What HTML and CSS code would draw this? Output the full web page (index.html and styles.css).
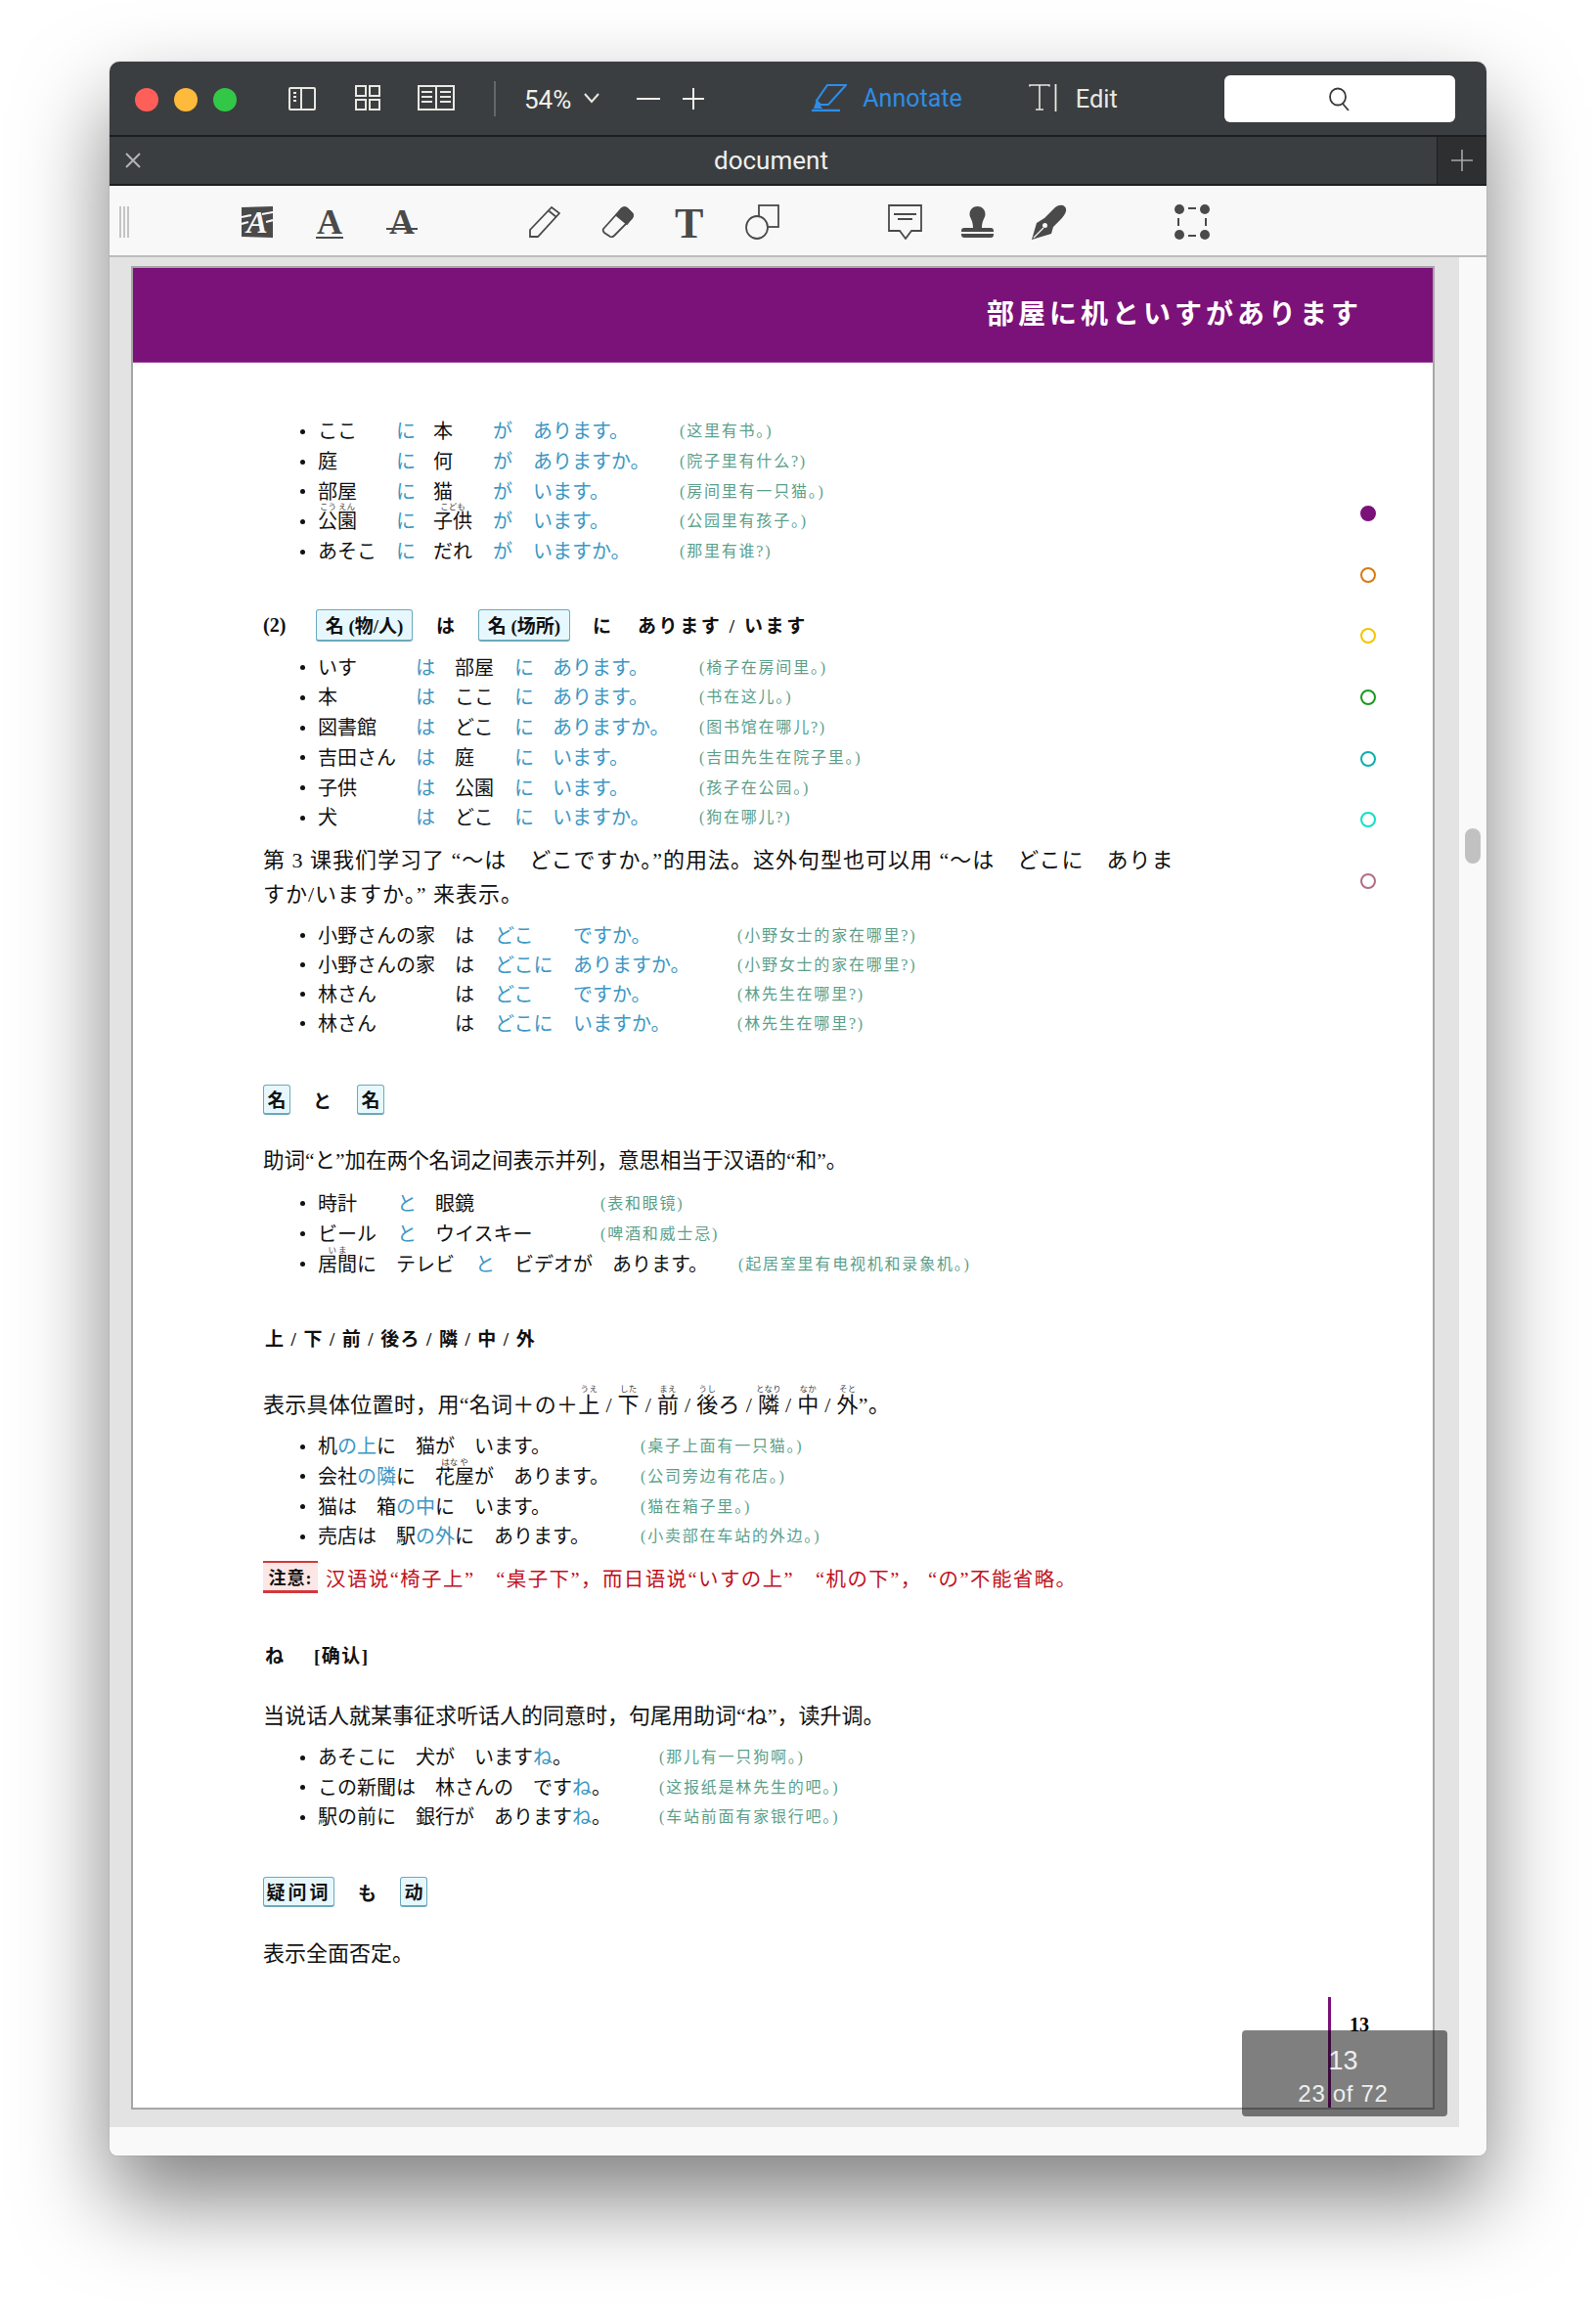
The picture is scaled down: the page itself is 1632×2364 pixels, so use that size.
FILE: index.html
```html
<!DOCTYPE html>
<html lang="ja">
<head>
  <meta charset="utf-8">
  <title>document</title>
  <link rel="stylesheet" href="styles.css">
</head>
<body>
<div class="window">

  <div class="titlebar">
    <div class="lights">
      <span class="light red"></span>
      <span class="light yellow"></span>
      <span class="light green"></span>
    </div>
    <svg class="tb-sidebar" width="28" height="24" viewBox="0 0 28 24" fill="none" stroke="#e8e8e0" stroke-width="2">
      <rect x="1" y="1" width="26" height="22" rx="1"/><path d="M13 1v22M5 6h3M5 10h3M5 14h3"/>
    </svg>
    <svg class="tb-grid" width="26" height="26" viewBox="0 0 26 26" fill="none" stroke="#e8e8e0" stroke-width="2">
      <rect x="1" y="1" width="10" height="10"/><rect x="15" y="1" width="10" height="10"/>
      <rect x="1" y="15" width="10" height="10"/><rect x="15" y="15" width="10" height="10"/>
    </svg>
    <svg class="tb-book" width="38" height="26" viewBox="0 0 38 26" fill="none" stroke="#e8e8e0" stroke-width="2">
      <rect x="1" y="1" width="36" height="24"/><path d="M19 1v24M4 7h11M4 12h11M4 17h11M23 7h11M23 12h11M23 17h11"/>
    </svg>
    <span class="tb-divider"></span>
    <span class="zoom-value">54%</span>
    <svg class="tb-chevron" width="16" height="11" viewBox="0 0 16 11" fill="none" stroke="#e8e8e0" stroke-width="2"><path d="M1 1l7 8 7-8"/></svg>
    <span class="zoom-minus"></span>
    <svg class="tb-plus" width="22" height="22" viewBox="0 0 22 22" stroke="#f0f0e8" stroke-width="2"><path d="M0 11h22M11 0v22"/></svg>
    <svg class="tb-annotate" width="36" height="28" viewBox="0 0 36 28" fill="none" stroke="#2e8de6" stroke-width="2">
      <path d="M16 1h19L17 21H9L5 17z"/><path d="M0 27h29" stroke-width="2.400"/><path d="M5 16l-3 9h9z" fill="#2e8de6" stroke="none"/>
    </svg>
    <span class="annotate-label">Annotate</span>
    <svg class="tb-edit" width="29" height="28" viewBox="0 0 29 28" fill="none" stroke="#e8e8e0" stroke-width="1.600">
      <path d="M1 2.500V1h20v1.500M11 1v25M7 26h8"/><path d="M27.500 0v28" stroke-width="1.800"/>
    </svg>
    <span class="edit-label">Edit</span>
    <div class="search">
      <svg width="22" height="24" viewBox="0 0 22 24" fill="none" stroke="#3a3a3a" stroke-width="1.800"><ellipse cx="9" cy="10" rx="8" ry="8.500"/><path d="M14 17l6 7"/></svg>
    </div>
  </div>

  <div class="tabbar">
    <svg class="tab-close" width="16" height="16" viewBox="0 0 16 16" stroke="#b4b4b4" stroke-width="2"><path d="M1 1l14 14M15 1L1 15"/></svg>
    <span class="tab-title">document</span>
    <div class="tab-add">
      <svg width="22" height="22" viewBox="0 0 22 22" stroke="#a8a8a8" stroke-width="1.600"><path d="M0 11h22M11 0v22"/></svg>
    </div>
  </div>

  <div class="toolbar">
    <span class="grip"></span>
    <div class="t-fill">
      <svg width="32" height="32" viewBox="0 0 32 32">
        <path d="M0 1l32-1v32L0 31z" fill="#4a4a4a"/>
        <path d="M0 11l10-2M0 18l7-2M21 8l11-2M25 16l7-2" stroke="#f8f8f8" stroke-width="2.200"/>
      </svg>
      <span class="fill-a">A</span>
    </div>
    <span class="t-under">A</span>
    <span class="t-strike">A</span>
    <svg class="t-pencil" width="32" height="32" viewBox="0 0 32 32" fill="none" stroke="#4a4a4a" stroke-width="1.800">
      <path d="M1 31v-7L23 1l8 6L9 31z"/><path d="M20 4.500l8 6.500"/>
    </svg>
    <svg class="t-eraser" width="33" height="32" viewBox="0 0 33 32" fill="none" stroke="#4a4a4a" stroke-width="1.800">
      <path d="M2 23L20 3q3-3 6-1l5 5q2 2 0 5L13 30q-2 2-4 1l-6-4q-2-2-1-4z"/>
      <path d="M15 9l5-6q3-3 6-1l5 5q2 2 0 5l-5 6z" fill="#4a4a4a"/>
    </svg>
    <span class="t-text">T</span>
    <svg class="t-shape" width="35" height="36" viewBox="0 0 35 36" fill="none" stroke="#4a4a4a" stroke-width="1.800">
      <rect x="14" y="1" width="20" height="22"/><ellipse cx="12" cy="23.500" rx="11" ry="11.500" fill="#f8f8f8"/>
    </svg>
    <svg class="t-comment" width="36" height="36" viewBox="0 0 36 36" fill="none" stroke="#4a4a4a" stroke-width="1.800">
      <path d="M1 1h33v26H24l-6 8-6-8H1z"/><path d="M6 10h23M10 15h15"/>
    </svg>
    <svg class="t-stamp" width="33" height="32" viewBox="0 0 33 32" fill="#4a4a4a">
      <path d="M16.500 0c4.500 0 8 3.500 8 8 0 4-3.500 6-3.500 14h-9c0-8-3.500-10-3.500-14 0-4.500 3.500-8 8-8z"/>
      <path d="M0 25q0-3 3-3h27q3 0 3 3v1H0z"/><path d="M0 28h33v1q0 3-3 3H3q-3 0-3-3z"/>
    </svg>
    <svg class="t-pen" width="36" height="36" viewBox="0 0 36 36">
      <path d="M0 36L5 19l8-5L24 3q4-3 8-2 4 2 3 6-1 4-6 9l-7 7-2 7z" fill="#4a4a4a"/>
      <circle cx="13.500" cy="21.500" r="2.500" fill="#f8f8f8"/><path d="M2 34l10-10" stroke="#f8f8f8" stroke-width="1.200"/>
    </svg>
    <svg class="t-select" width="36" height="36" viewBox="0 0 36 36" fill="#4a4a4a" stroke="none">
      <ellipse cx="5" cy="5" rx="5" ry="5"/><ellipse cx="31" cy="5" rx="5" ry="5"/>
      <ellipse cx="5" cy="31" rx="5" ry="5"/><ellipse cx="31" cy="31" rx="5" ry="5"/>
      <path d="M14 3h8v2h-8zM14 31h8v2h-8zM3 14h2v8H3zM31 14h2v8h-2z"/>
    </svg>
  </div>

  <div class="viewer">
    <div class="canvas">
      <div class="page">
        <div class="banner">部屋に机といすがあります</div>

        <div class="content">
          <div class="list list-a">
            <div class="row"><span>ここ</span><span class="b">に</span><span>本</span><span class="b">が</span><span class="b">あります。</span><span class="tr">(这里有书。)</span></div>
            <div class="row"><span>庭</span><span class="b">に</span><span>何</span><span class="b">が</span><span class="b">ありますか。</span><span class="tr">(院子里有什么?)</span></div>
            <div class="row"><span>部屋</span><span class="b">に</span><span>猫</span><span class="b">が</span><span class="b">います。</span><span class="tr">(房间里有一只猫。)</span></div>
            <div class="row"><span><ruby>公園<rt>こう えん</rt></ruby></span><span class="b">に</span><span><ruby>子供<rt>こども</rt></ruby></span><span class="b">が</span><span class="b">います。</span><span class="tr">(公园里有孩子。)</span></div>
            <div class="row"><span>あそこ</span><span class="b">に</span><span>だれ</span><span class="b">が</span><span class="b">いますか。</span><span class="tr">(那里有谁?)</span></div>
          </div>

          <div class="heading heading-two">
            <span class="num">(2)</span>
            <span class="tag tag-wide">名 (物/人)</span>
            <span class="lift">は</span>
            <span class="tag tag-place">名 (场所)</span>
            <span class="lift">に</span>
            <span class="spaced lift">あります / います</span>
          </div>

          <div class="list list-b">
            <div class="row"><span>いす</span><span class="b">は</span><span>部屋</span><span class="b">に</span><span class="b">あります。</span><span class="tr">(椅子在房间里。)</span></div>
            <div class="row"><span>本</span><span class="b">は</span><span>ここ</span><span class="b">に</span><span class="b">あります。</span><span class="tr">(书在这儿。)</span></div>
            <div class="row"><span>図書館</span><span class="b">は</span><span>どこ</span><span class="b">に</span><span class="b">ありますか。</span><span class="tr">(图书馆在哪儿?)</span></div>
            <div class="row"><span>吉田さん</span><span class="b">は</span><span>庭</span><span class="b">に</span><span class="b">います。</span><span class="tr">(吉田先生在院子里。)</span></div>
            <div class="row"><span>子供</span><span class="b">は</span><span>公園</span><span class="b">に</span><span class="b">います。</span><span class="tr">(孩子在公园。)</span></div>
            <div class="row"><span>犬</span><span class="b">は</span><span>どこ</span><span class="b">に</span><span class="b">いますか。</span><span class="tr">(狗在哪儿?)</span></div>
          </div>

          <p class="para para-first">第 3 课我们学习了 “～は　どこですか。”的用法。这外句型也可以用 “～は　どこに　ありま<br>すか/いますか。” 来表示。</p>

          <div class="list list-c">
            <div class="row"><span>小野さんの家</span><span>は</span><span class="b">どこ</span><span class="b">ですか。</span><span class="tr">(小野女士的家在哪里?)</span></div>
            <div class="row"><span>小野さんの家</span><span>は</span><span class="b">どこに</span><span class="b">ありますか。</span><span class="tr">(小野女士的家在哪里?)</span></div>
            <div class="row"><span>林さん</span><span>は</span><span class="b">どこ</span><span class="b">ですか。</span><span class="tr">(林先生在哪里?)</span></div>
            <div class="row"><span>林さん</span><span>は</span><span class="b">どこに</span><span class="b">いますか。</span><span class="tr">(林先生在哪里?)</span></div>
          </div>

          <div class="heading heading-to">
            <span class="tag tag-one">名</span>
            <span>と</span>
            <span class="tag tag-one">名</span>
          </div>

          <p class="para para-to">助词“と”加在两个名词之间表示并列，意思相当于汉语的“和”。</p>

          <div class="list list-d">
            <div class="row"><span>時計</span><span class="b">と</span><span>眼鏡</span><span class="tr">(表和眼镜)</span></div>
            <div class="row"><span>ビール</span><span class="b">と</span><span>ウイスキー</span><span class="tr">(啤酒和威士忌)</span></div>
          </div>
          <div class="list list-d2">
            <div class="row"><span><ruby>居間<rt>い ま</rt></ruby>に</span><span>テレビ</span><span class="b">と</span><span>ビデオが</span><span>あります。</span><span class="tr">(起居室里有电视机和录象机。)</span></div>
          </div>

          <div class="heading heading-pos">上 / 下 / 前 / 後ろ / 隣 / 中 / 外</div>

          <p class="para para-pos">表示具体位置时，用“名词＋の＋<ruby>上<rt>うえ</rt></ruby> / <ruby>下<rt>した</rt></ruby> / <ruby>前<rt>まえ</rt></ruby> / <ruby>後<rt>うし</rt></ruby>ろ / <ruby>隣<rt>となり</rt></ruby> / <ruby>中<rt>なか</rt></ruby> / <ruby>外<rt>そと</rt></ruby>”。</p>

          <div class="list list-e">
            <div class="row"><span>机<span class="b">の上</span>に　猫が　います。</span><span class="tr">(桌子上面有一只猫。)</span></div>
            <div class="row"><span>会社<span class="b">の隣</span>に　<ruby>花屋<rt>はな や</rt></ruby>が　あります。</span><span class="tr">(公司旁边有花店。)</span></div>
            <div class="row"><span>猫は　箱<span class="b">の中</span>に　います。</span><span class="tr">(猫在箱子里。)</span></div>
            <div class="row"><span>売店は　駅<span class="b">の外</span>に　あります。</span><span class="tr">(小卖部在车站的外边。)</span></div>
          </div>

          <div class="note">
            <span class="note-tag">注意:</span>
            <span class="note-text">汉语说“椅子上”　“桌子下”，而日语说“いすの上”　“机の下”， “の”不能省略。</span>
          </div>

          <div class="heading heading-ne">
            <span>ね</span>
            <span class="ne-note">[确认]</span>
          </div>

          <p class="para para-ne">当说话人就某事征求听话人的同意时，句尾用助词“ね”，读升调。</p>

          <div class="list list-f">
            <div class="row"><span>あそこに　犬が　います<span class="b">ね</span>。</span><span class="tr">(那儿有一只狗啊。)</span></div>
            <div class="row"><span>この新聞は　林さんの　です<span class="b">ね</span>。</span><span class="tr">(这报纸是林先生的吧。)</span></div>
            <div class="row"><span>駅の前に　銀行が　あります<span class="b">ね</span>。</span><span class="tr">(车站前面有家银行吧。)</span></div>
          </div>

          <div class="heading heading-mo">
            <span class="tag tag-three">疑问词</span>
            <span>も</span>
            <span class="tag tag-one">动</span>
          </div>

          <p class="para para-mo">表示全面否定。</p>
        </div>

        <div class="page-foot">
          <span class="foot-line"></span>
          <span class="foot-num">13</span>
        </div>

        <div class="dots">
          <span class="dot dot-on"></span>
          <span class="dot dot-orange"></span>
          <span class="dot dot-yellow"></span>
          <span class="dot dot-green"></span>
          <span class="dot dot-teal"></span>
          <span class="dot dot-aqua"></span>
          <span class="dot dot-rose"></span>
        </div>
      </div>
    </div>
    <div class="scroll"><span class="thumb"></span></div>

    <div class="page-hud">
      <span class="hud-label">13</span>
      <span class="hud-count">23 of 72</span>
    </div>
  </div>

</div>
</body>
</html>
```

FILE: styles.css
```css
* {
  box-sizing: border-box;
}
html, body {
  margin: 0;
  background: #fff;
}
body {
  width: 1632px;
  height: 2364px;
  padding: 63px 0 0 112px;
  overflow: hidden;
  font-family: "Liberation Serif", "Noto Sans CJK JP", serif;
}
.window {
  width: 1408px;
  height: 2141px;
  display: flex;
  flex-direction: column;
  border-radius: 10px 10px 8px 8px;
  overflow: hidden;
  box-shadow: 0 44px 90px rgba(0, 0, 0, 0.5), 0 0 1px rgba(0, 0, 0, 0.5);
}

/* title bar */
.titlebar {
  height: 77px;
  flex: none;
  display: flex;
  align-items: center;
  background: #3b3e41;
  border-bottom: 2px solid #1d1e20;
  font-family: Roboto, sans-serif;
}
.lights {
  display: flex;
  gap: 16px;
  margin-left: 26px;
  margin-top: 2px;
}
.light {
  width: 24px;
  height: 24px;
  border-radius: 50%;
}
.red { background: #fe5f58; }
.yellow { background: #feba3a; }
.green { background: #33c748; }
.tb-sidebar { margin-left: 53px; }
.tb-grid { margin-left: 40px; margin-top: -2px; }
.tb-book { margin-left: 38px; margin-top: -2px; }
.tb-divider {
  width: 2px;
  height: 36px;
  margin-left: 40px;
  background: #63666a;
}
.zoom-value {
  margin-left: 29px;
  font-size: 26px;
  color: #f0f0e8;
  margin-top: 2px;
}
.tb-chevron { margin-left: 13px; }
.zoom-minus {
  width: 24px;
  height: 2px;
  margin-left: 38px;
  background: #f0f0e8;
}
.tb-plus { margin-left: 23px; }
.tb-annotate { margin-left: 110px; margin-top: -2px; }
.annotate-label {
  margin-left: 16px;
  font-size: 25px;
  color: #2e8de6;
}
.tb-edit { margin-left: 68px; margin-top: -2px; }
.edit-label {
  margin-left: 19px;
  font-size: 25.500px;
  color: #e8e8e0;
}
.search {
  width: 236px;
  height: 48px;
  margin-left: auto;
  margin-right: 32px;
  background: #fff;
  border-radius: 6px;
  display: flex;
  align-items: center;
  justify-content: center;
}

/* tab bar */
.tabbar {
  height: 50px;
  flex: none;
  display: flex;
  align-items: center;
  padding-left: 16px;
  background: #3b3e41;
  border-bottom: 2px solid #1d1e20;
  font-family: Roboto, sans-serif;
}
.tab-title {
  margin-left: 586px;
  font-size: 26px;
  color: #f0f0ee;
  margin-top: -1px;
}
.tab-add {
  width: 51px;
  height: 48px;
  margin-left: auto;
  background: #2e2f31;
  border-left: 1px solid #1d1e20;
  display: flex;
  align-items: center;
  justify-content: center;
}

/* tools */
.toolbar {
  height: 73px;
  flex: none;
  display: flex;
  align-items: center;
  padding-top: 3px;
  background: #f8f8f8;
  border-bottom: 2px solid #bcbcbc;
}
.grip {
  width: 10px;
  height: 32px;
  margin-left: 10px;
  background: repeating-linear-gradient(90deg, #c4c4c4 0 2px, #f8f8f8 2px 4px);
}
.t-fill {
  position: relative;
  width: 32px;
  height: 32px;
  margin-left: 115px;
}
.t-fill svg {
  display: block;
}
.fill-a {
  position: absolute;
  left: 0;
  right: 0;
  top: 0;
  text-align: center;
  font: italic bold 32px/32px "Liberation Serif", serif;
  color: #f8f8f8;
}
.t-under, .t-strike {
  position: relative;
  height: 36px;
  text-align: center;
  font: bold 36px/36px "Liberation Serif", serif;
  color: #4a4a4a;
}
.t-under {
  width: 28px;
  margin-left: 44px;
}
.t-strike {
  width: 32px;
  margin-left: 44px;
}
.t-under::after, .t-strike::after {
  content: "";
  position: absolute;
  left: 0;
  right: 0;
  height: 2px;
  background: #4a4a4a;
}
.t-under::after { top: 33px; }
.t-strike::after { top: 24px; }
.t-pencil { margin-left: 114px; }
.t-eraser { margin-left: 42px; }
.t-text {
  width: 29px;
  height: 44px;
  margin-left: 42px;
  margin-top: 3px;
  text-align: center;
  font: bold 44px/44px "Liberation Serif", serif;
  color: #4a4a4a;
}
.t-shape { margin-left: 43px; }
.t-comment { margin-left: 111px; }
.t-stamp { margin-left: 39px; }
.t-pen { margin-left: 39px; }
.t-select { margin-left: 110px; }

/* document area */
.viewer {
  flex: 1;
  display: flex;
  position: relative;
  background: #f9f9f9;
}
.canvas {
  width: 1380px;
  height: 1912px;
  flex: none;
  padding: 9px 25px 18px 22px;
  background: #e3e3e3;
}
.scroll {
  flex: 1;
  padding: 584px 0 0 6px;
}
.thumb {
  display: block;
  width: 16px;
  height: 36px;
  border-radius: 8px;
  background: #c1c1c1;
}
.page {
  position: relative;
  height: 100%;
  display: flex;
  flex-direction: column;
  background: #fff;
  border: 2px solid #a6a6a6;
}
.banner {
  height: 97px;
  flex: none;
  padding: 0 72px 7px 0;
  display: flex;
  align-items: center;
  justify-content: flex-end;
  background: #7b1279;
  border-bottom: 1px solid #a75aa6;
  color: #fff;
  font-family: "Noto Sans CJK JP", sans-serif;
  font-weight: bold;
  font-size: 28px;
  letter-spacing: 4px;
}
.content {
  padding: 55px 0 0 133px;
  font-size: 20px;
  color: #111;
}

/* bullet rows */
.list {
  padding-left: 38px;
}
.row {
  height: 30.700px;
  display: grid;
  align-items: center;
  line-height: 30px;
  white-space: nowrap;
}
.row::before {
  content: "";
  width: 5px;
  height: 5px;
  border-radius: 50%;
  background: #111;
}
.b {
  color: #3c97c4;
}
.tr {
  font-family: "Liberation Serif", "Noto Sans CJK SC", serif;
  font-size: 16px;
  letter-spacing: 1.800px;
  color: #5b9f8b;
}
.list-a .row { grid-template-columns: 18px 80px 38px 61px 41px 150px auto; }
.list-b { margin-top: 11px; }
.list-b .row { grid-template-columns: 18px 100px 40px 61px 39px 150px auto; }
.list-c { margin-top: 10px; }
.list-c .row { height: 30px; grid-template-columns: 18px 140px 41px 80px 168px auto; }
.list-d { margin-top: 11.500px; }
.list-d .row { height: 31px; grid-template-columns: 18px 81px 39px 169px auto; }
.list-d2 .row { height: 31px; grid-template-columns: 18px 80px 81px 40px 100px 129px auto; }
.list-e { margin-top: 10px; }
.list-e .row { height: 30.600px; grid-template-columns: 18px 330px auto; }
.list-f { margin-top: 9.500px; }
.list-f .row { height: 30.500px; grid-template-columns: 18px 349px auto; }

/* furigana sits above the base word, it must not grow the line */
ruby {
  display: inline-block;
  position: relative;
}
rt {
  position: absolute;
  left: -8px;
  right: -8px;
  top: -6px;
  text-align: center;
  font-size: 8.500px;
  line-height: 10px;
  color: #444;
  font-family: "Noto Sans CJK JP", sans-serif;
}

/* headings and boxed words */
.heading {
  display: grid;
  align-items: center;
  justify-items: start;
  font-family: "Liberation Serif", "Noto Sans CJK SC", serif;
  font-weight: bold;
  font-size: 19px;
  color: #111;
}
.tag {
  height: 100%;
  padding-bottom: 1px;
  display: flex;
  align-items: center;
  justify-content: center;
  background: #e6f8fe;
  border: 1px solid #6da8bb;
  border-bottom-width: 2px;
  border-radius: 3px;
  white-space: nowrap;
}
.tag-wide { width: 99px; }
.tag-place { width: 94px; }
.tag-one { width: 28px; }
.tag-three { width: 73px; letter-spacing: 3px; }
.heading-two {
  height: 33px;
  margin-top: 44px;
  grid-template-columns: 54px 123px 43px 117px 46px auto;
}
.lift {
  margin-top: -2px;
}
.num {
  font-size: 20px;
}
.spaced {
  letter-spacing: 2.600px;
  white-space: nowrap;
}
.heading-to {
  height: 28px;
  margin-top: 47.500px;
  grid-template-columns: 51px 45px auto;
}
.heading-pos {
  height: 28px;
  margin-top: 48px;
  display: block;
  line-height: 28px;
  font-size: 19px;
  padding-left: 2px;
  letter-spacing: 1.400px;
}
.heading-ne {
  height: 28px;
  margin-top: 48px;
  grid-template-columns: 50px auto;
  padding-left: 2px;
}
.ne-note {
  letter-spacing: 1.500px;
}
.heading-mo {
  height: 29px;
  margin-top: 46px;
  grid-template-columns: 97px 43px auto;
}

/* paragraphs */
.para {
  margin: 0;
  font-family: "Liberation Serif", "Noto Sans CJK SC", serif;
  font-size: 22px;
  line-height: 34px;
  color: #111;
  white-space: nowrap;
}
.para-first {
  margin-top: 10px;
  line-height: 35px;
  letter-spacing: 1px;
}
.para-to {
  margin-top: 32.500px;
  font-size: 21.500px;
}
.para-pos {
  margin-top: 36px;
  letter-spacing: 0.300px;
}
.para-ne { margin-top: 33px; }
.para-mo { margin-top: 33px; }

/* red remark */
.note {
  height: 33px;
  margin-top: 10px;
  display: flex;
  align-items: center;
  font-family: "Liberation Serif", "Noto Sans CJK SC", serif;
}
.note-tag {
  width: 56px;
  height: 33px;
  display: flex;
  align-items: center;
  justify-content: center;
  background: #fde6e6;
  border-top: 2px solid #d2383c;
  border-bottom: 3px solid #d2383c;
  font-weight: bold;
  font-size: 18px;
  letter-spacing: 1px;
}
.note-text {
  margin-left: 8px;
  font-size: 20.500px;
  letter-spacing: 1.400px;
  color: #c2101c;
  white-space: nowrap;
}

/* page number + pager */
.page-foot {
  height: 113px;
  margin-top: auto;
  display: flex;
  padding-left: 1222px;
}
.foot-line {
  width: 3px;
  height: 113px;
  background: #7b1279;
}
.foot-num {
  margin: 17px 0 0 19px;
  font-weight: bold;
  font-size: 20px;
  color: #000;
}
.dots {
  position: absolute;
  left: 1255px;
  top: 243px;
  display: flex;
  flex-direction: column;
  gap: 46.700px;
}
.dot {
  width: 16px;
  height: 16px;
  border-radius: 50%;
  border: 2.500px solid;
}
.dot-on { background: #7b1279; border-color: #7b1279; }
.dot-orange { border-color: #d9790d; }
.dot-yellow { border-color: #f5c400; }
.dot-green { border-color: #1a9a1f; }
.dot-teal { border-color: #0bb0ac; }
.dot-aqua { border-color: #14dec6; }
.dot-rose { border-color: #b06e85; }
.page-hud {
  position: absolute;
  left: 1158px;
  top: 1813px;
  width: 210px;
  height: 88px;
  display: flex;
  flex-direction: column;
  align-items: center;
  padding: 13px 3px 0 0;
  border-radius: 4px;
  background: rgba(0, 0, 0, 0.5);
  color: #eee;
  font-family: "Liberation Sans", sans-serif;
}
.hud-label {
  font-size: 27px;
  line-height: 36px;
}
.hud-count {
  font-size: 24px;
  line-height: 28px;
  letter-spacing: 0.700px;
  margin-top: 2px;
}
```
